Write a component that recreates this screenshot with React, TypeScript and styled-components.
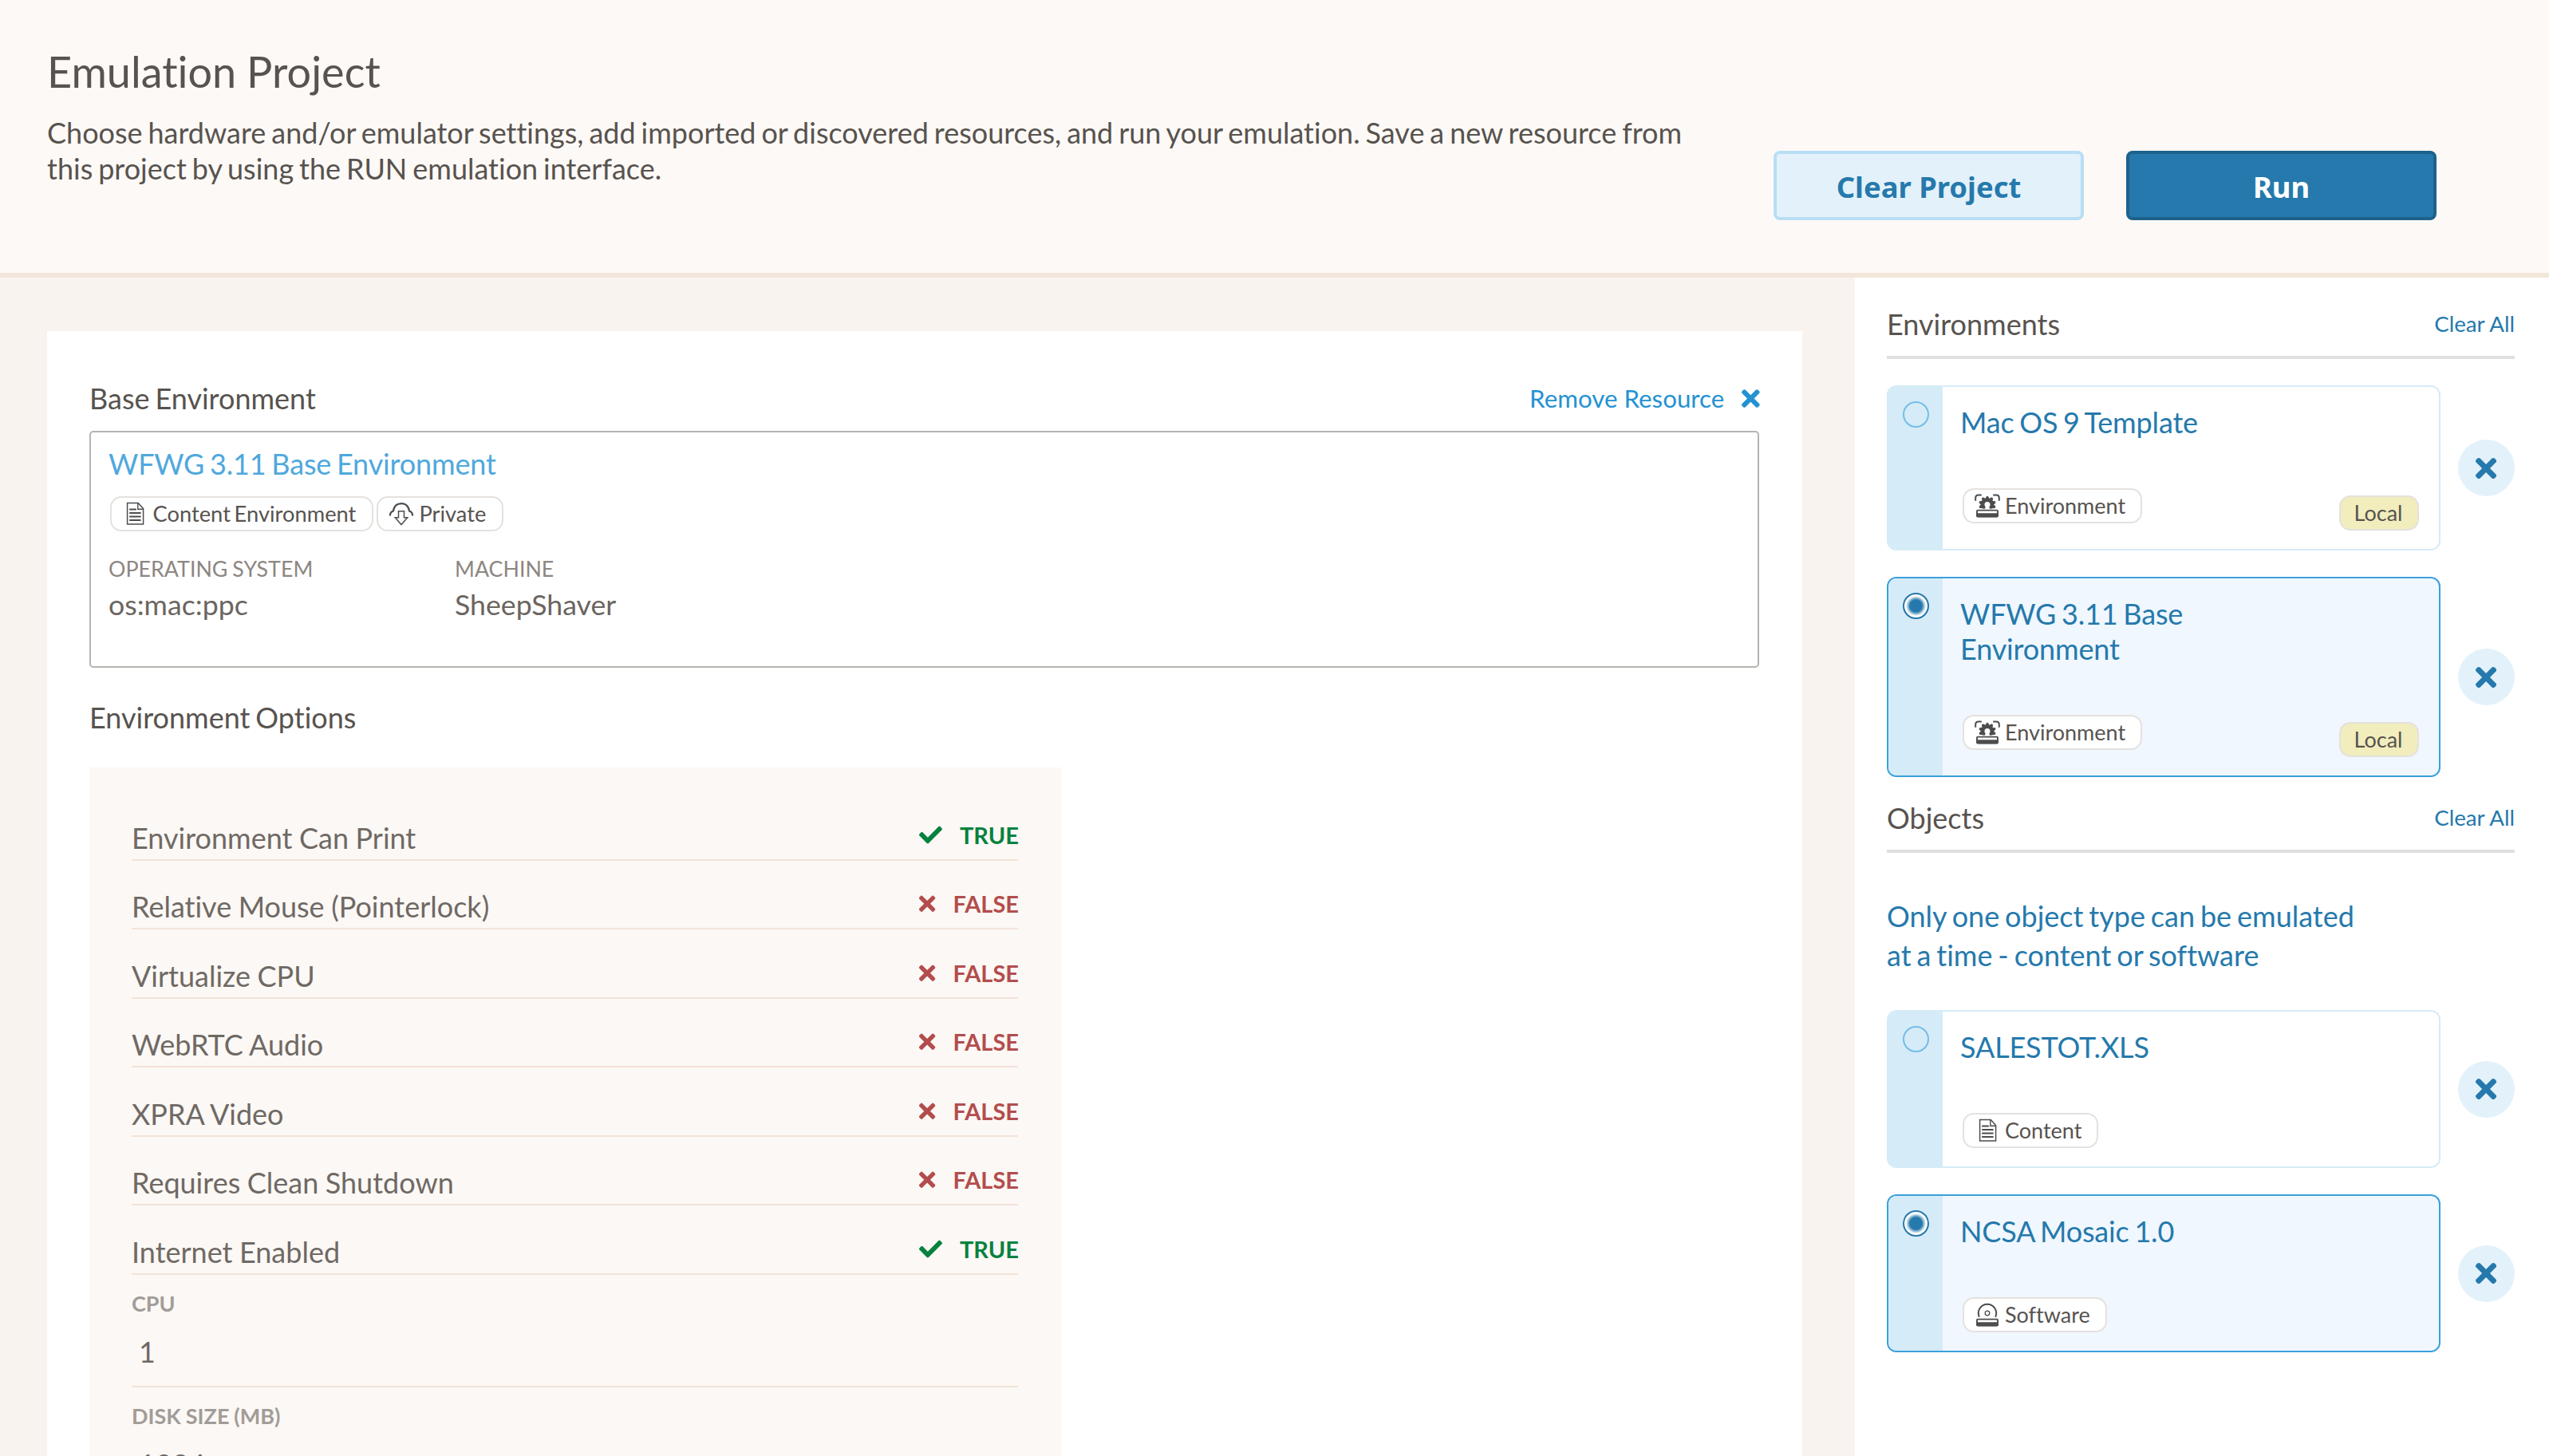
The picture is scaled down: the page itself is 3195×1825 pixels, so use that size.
import React from 'react';
import styled, {createGlobalStyle, css} from "styled-components";
import {FaCheck, FaTimes} from "react-icons/fa";

type IconName = "content" | "private" | "environment" | "software"

type Resource = {
    title: string,
    type: string,
    icon: IconName,
    selected?: boolean,
    local?: boolean,
}

const ENVIRONMENTS: Resource[] = [
    {title: "Mac OS 9 Template", type: "Environment", icon: "environment", local: true},
    {title: "WFWG 3.11 Base Environment", type: "Environment", icon: "environment", local: true, selected: true},
]

const OBJECTS: Resource[] = [
    {title: "SALESTOT.XLS", type: "Content", icon: "content"},
    {title: "NCSA Mosaic 1.0", type: "Software", icon: "software", selected: true},
]

const OPTIONS: { label: string, enabled: boolean }[] = [
    {label: "Environment Can Print", enabled: true},
    {label: "Relative Mouse (Pointerlock)", enabled: false},
    {label: "Virtualize CPU", enabled: false},
    {label: "WebRTC Audio", enabled: false},
    {label: "XPRA Video", enabled: false},
    {label: "Requires Clean Shutdown", enabled: false},
    {label: "Internet Enabled", enabled: true},
]

const SETTINGS = [
    {label: "CPU", value: "1"},
    {label: "DISK SIZE (MB)", value: "1024"},
]

const GlobalStyle = createGlobalStyle`
    * {
        box-sizing: border-box;
    }

    body {
        margin: 0;
        font-family: Lato, "Liberation Sans", sans-serif;
        font-size: 36px;
        line-height: 44px;
        font-variant-ligatures: none;
        word-spacing: -2.3px;
        color: #57534f;
    }

    h1, h2, h3, p {
        margin: 0;
        font-weight: 400;
        font-size: inherit;
    }

    button {
        border: 0;
        padding: 0;
        background: none;
        font: inherit;
        font-variant-ligatures: none;
        cursor: pointer;
    }
`

const Page = styled.div`
    height: 1825px;
    display: flex;
    flex-direction: column;
    overflow: hidden;
`

const Header = styled.header`
    flex: none;
    height: 348px;
    display: flex;
    justify-content: space-between;
    padding: 58px 141px 0 59px;
    background: #fdf9f6;
    border-bottom: 6px solid #f2e6da;
`

const Intro = styled.div`
    width: 2076px;
`

const PageTitle = styled.h1`
    font-size: 54px;
    line-height: 64px;
    margin-bottom: 22px;
    word-spacing: -1px;
`

const Description = styled.p`
    line-height: 45px;
`

const Actions = styled.div`
    display: flex;
    gap: 53px;
    padding-top: 131px;
`

const ActionButton = styled.button<{ $primary?: boolean }>`
    width: 389px;
    height: 87px;
    padding-top: 2px;
    border: 4px solid #b8def5;
    border-radius: 8px;
    background: #e3f1fa;
    color: #2579ac;
    font-family: "Noto Sans", "Open Sans", sans-serif;
    font-size: 36.4px;
    font-weight: 700;
    word-spacing: 0;

    ${({$primary}) => $primary && css`
        border-color: #1d628c;
        background: #2579ac;
        color: #fff;
    `}
`

const Content = styled.div`
    flex: 1;
    min-height: 0;
    display: grid;
    grid-template-columns: 2325px 1fr;
`

const Main = styled.main`
    padding: 67px 66px 0 59px;
    background: #f8f3ee;
    overflow: hidden;
`

const Card = styled.section`
    min-height: 1500px;
    padding: 62px 54px 0 53px;
    background: #fff;
`

const CardHeader = styled.div`
    display: flex;
    justify-content: space-between;
    align-items: center;
    margin-bottom: 19px;
`

const RemoveButton = styled.button`
    display: flex;
    align-items: center;
    gap: 22px;
    margin-right: -1px;
    font-size: 31.3px;
    line-height: 36px;
    color: #2492d1;
`

const Cross = styled(FaTimes)<{ $size: number }>`
    flex: none;
    height: ${({$size}) => $size}px;
    width: ${({$size}) => $size * 0.6875}px;
`

const BaseBox = styled.div`
    height: 297px;
    padding: 17px 22px;
    border: 2px solid #b8b3af;
    border-radius: 5px;
`

const BaseTitle = styled.h3`
    letter-spacing: -0.15px;
    color: #4fa8dd;
`

const Badge = styled.span`
    display: inline-flex;
    align-items: center;
    gap: 6px;
    height: 44px;
    padding: 0 19px 1px 13px;
    border: 2px solid #e5e1de;
    border-radius: 14px;
    background: #fff;
    font-size: 27px;
    line-height: 39px;
    color: #57534f;
`

const BadgeList = styled.div`
    display: flex;
    gap: 4px;
    margin: 19px 0 31px 2px;

    ${Badge} {
        padding-right: 19.5px;
        gap: 6.5px;
        font-size: 27.3px;
    }
`

const LocalBadge = styled(Badge)`
    width: 100px;
    margin-top: 9px;
    padding: 0 2px 1px 0;
    justify-content: center;
    background: #f1edbd;
`

const BadgeIcon = styled.svg`
    flex: none;
    width: 32px;
    height: 30px;
    fill: none;
    stroke: #4d4d4d;
`

const Details = styled.div`
    display: grid;
    grid-template-columns: 434px 434px;
`

const DetailLabel = styled.div`
    margin-bottom: 7px;
    font-size: 26.8px;
    line-height: 32px;
    word-spacing: -1px;
    color: #8d8681;
`

const DetailValue = styled.div`
    font-size: 35.7px;
    color: #6b6560;
`

const SectionTitle = styled.h2`
    margin: 40px 0 41px;
`

const Options = styled.div`
    width: 1218px;
    padding: 30px 54px 0 53px;
    background: #fcf8f5;
    color: #6f6964;
    word-spacing: -0.7px;
`

const OptionRow = styled.div`
    height: 86.5px;
    display: flex;
    justify-content: space-between;
    align-items: flex-end;
    padding-bottom: 5px;
    border-bottom: 2px solid #f2e3d8;
`

const OptionState = styled.span<{ $enabled: boolean }>`
    display: flex;
    align-items: center;
    gap: 22px;
    margin: 0 -1px 8px 0;
    font-size: 29px;
    line-height: 34px;
    font-weight: 700;
    color: ${({$enabled}) => $enabled ? "#05823f" : "#b34d4d"};
`

const Setting = styled.div`
    height: 141px;
    padding-top: 20px;
    border-bottom: 2px solid #f2e3d8;
`

const SettingLabel = styled.div`
    margin-bottom: 22px;
    font-size: 27px;
    line-height: 32px;
    font-weight: 700;
    color: #a19c98;
`

const SettingValue = styled.div`
    padding-left: 9px;
`

const Sidebar = styled.aside`
    padding: 7px 43px 0 40px;
    background: #fff;
`

const SidebarHeader = styled.div`
    display: flex;
    justify-content: space-between;
    align-items: center;
    margin-top: 29px;
    padding-bottom: 18px;
    border-bottom: 4px solid #e0e0df;
`

const ClearAll = styled.button`
    font-size: 27.7px;
    line-height: 32px;
    color: #2579ac;
`

const Notice = styled.p`
    width: 620px;
    margin: 55px 0 44px;
    line-height: 49px;
    color: #2579ac;
`

const ResourceList = styled.div`
    display: flex;
    flex-direction: column;
    gap: 33px;
    margin-top: 33px;
`

const ResourceRow = styled.div`
    display: flex;
    align-items: center;
    justify-content: space-between;
`

const ResourceCard = styled.div<{ $selected?: boolean }>`
    width: 694px;
    display: flex;
    border: 2px solid ${({$selected}) => $selected ? "#3ba0dc" : "#d5ebf7"};
    border-radius: 12px;
    background: ${({$selected}) => $selected ? "#f0f7fe" : "#fff"};
    overflow: hidden;
`

const RadioStrip = styled.div`
    flex: none;
    width: 68px;
    display: flex;
    justify-content: center;
    padding-top: 18px;
    background: #d5ebf7;
`

const Radio = styled.span<{ $selected?: boolean }>`
    width: 33px;
    height: 33px;
    border: 2px solid ${({$selected}) => $selected ? "#2579ac" : "#74bde8"};
    border-radius: 50%;
    background: ${({$selected}) => $selected
            ? "radial-gradient(circle closest-side, #2579ac 52%, #fff 86%)"
            : "transparent"};
`

const ResourceBody = styled.div`
    flex: 1;
    padding: 22px 25px 23px 22px;
`

const ResourceTitle = styled.h3`
    width: 350px;
    margin-bottom: 61px;
    letter-spacing: -0.15px;
    color: #2579ac;
`

const ResourceFooter = styled.div`
    display: flex;
    justify-content: space-between;
    align-items: flex-start;
    margin-left: 3px;
`

const RoundButton = styled.button`
    width: 71px;
    height: 71px;
    display: flex;
    align-items: center;
    justify-content: center;
    border-radius: 50%;
    background: #e3f1fa;
    color: #2579ac;
`

const DriveBase = () => (
    <>
        <rect x="2" y="19.6" width="28" height="10" rx="1.5" fill="#fff" stroke="none"/>
        <rect x="3" y="20.6" width="26" height="7.8" rx="1" strokeWidth="1.9"/>
        <path d="M2.2 24.2h27.6v3a2.2 2.2 0 0 1-2.2 2.2H4.4a2.2 2.2 0 0 1-2.2-2.2z" fill="#4d4d4d" stroke="none"/>
    </>
)

const ICONS: Record<IconName, React.ReactNode> = {
    content: (
        <>
            <path d="M6.6 1.6h13.600l6.400 7v19.400H6.600z" strokeWidth="1.5"/>
            <path d="M19.8 1.8v7.400h6.800" strokeWidth="1.4"/>
            <path d="M10 9.5h7M10 14h12.800M10 18.500h12.800M10 23h12.800" strokeWidth="2.2" strokeLinecap="round"/>
        </>
    ),
    private: (
        <>
            <path
                d="M1.9 17.5c0-3.400 1.500-5.300 4-6C7 5.500 11 2.200 16 2.200s9 3.300 10.100 9.300c2.500.7 4 2.600 4 6"
                strokeWidth="2.3"
            />
            <path d="M12.5 11.8h7v8h4.200L16 28.600l-7.700-8.800h4.200z" strokeWidth="1.5"/>
        </>
    ),
    environment: (
        <>
            <path d="M1.2 8.8V5.2Q1.2 1.600 4.800 1.600H8.800M23.200 1.600h4q3.600 0 3.600 3.600v3.600" strokeWidth="2"/>
            <circle cx="16" cy="13.5" r="5.7" strokeWidth="4.4"/>
            {[-108, -72, -36, 0, 36, 72, 108].map(angle => (
                <path
                    key={angle}
                    d="M13.6 6.8L15.300 3.300h1.400L18.400 6.800z"
                    transform={`rotate(${angle} 16 13.5)`}
                    fill="#4d4d4d"
                    strokeWidth="1"
                />
            ))}
            <path d="M14 15.500L12.600 20h6.800l-1.400-4.500z" fill="#fff" stroke="none"/>
            <rect x="2" y="18.6" width="28" height="3" fill="#fff" stroke="none"/>
            <DriveBase/>
        </>
    ),
    software: (
        <>
            <path d="M5.9 17.8A11.200 11.200 0 1 1 26.100 17.800" strokeWidth="2"/>
            <circle cx="16" cy="13" r="2.8" strokeWidth="1.3"/>
            <DriveBase/>
        </>
    ),
}

const TypeBadge = ({icon, text}: { icon: IconName, text: string }) => (
    <Badge>
        <BadgeIcon viewBox="0 0 32 30">{ICONS[icon]}</BadgeIcon>
        {text}
    </Badge>
)

const StateIcon = ({enabled}: { enabled: boolean }) => (
    enabled ? <FaCheck size={"29px"}/> : <Cross $size={29.5}/>
)

const ResourceItem = ({title, type, icon, selected, local}: Resource) => (
    <ResourceRow>
        <ResourceCard $selected={selected}>
            <RadioStrip>
                <Radio $selected={selected}/>
            </RadioStrip>
            <ResourceBody>
                <ResourceTitle>{title}</ResourceTitle>
                <ResourceFooter>
                    <TypeBadge icon={icon} text={type}/>
                    {local && <LocalBadge>Local</LocalBadge>}
                </ResourceFooter>
            </ResourceBody>
        </ResourceCard>
        <RoundButton>
            <Cross $size={38}/>
        </RoundButton>
    </ResourceRow>
)

const App = () => {
    return (
        <Page>
            <GlobalStyle/>
            <Header>
                <Intro>
                    <PageTitle>Emulation Project</PageTitle>
                    <Description>
                        Choose hardware and/or emulator settings, add imported or discovered resources, and run your
                        emulation. Save a new resource from this project by using the RUN emulation interface.
                    </Description>
                </Intro>
                <Actions>
                    <ActionButton>Clear Project</ActionButton>
                    <ActionButton $primary>Run</ActionButton>
                </Actions>
            </Header>
            <Content>
                <Main>
                    <Card>
                        <CardHeader>
                            <h2>Base Environment</h2>
                            <RemoveButton>
                                Remove Resource
                                <Cross $size={33}/>
                            </RemoveButton>
                        </CardHeader>
                        <BaseBox>
                            <BaseTitle>WFWG 3.11 Base Environment</BaseTitle>
                            <BadgeList>
                                <TypeBadge icon="content" text="Content Environment"/>
                                <TypeBadge icon="private" text="Private"/>
                            </BadgeList>
                            <Details>
                                <div>
                                    <DetailLabel>OPERATING SYSTEM</DetailLabel>
                                    <DetailValue>os:mac:ppc</DetailValue>
                                </div>
                                <div>
                                    <DetailLabel>MACHINE</DetailLabel>
                                    <DetailValue>SheepShaver</DetailValue>
                                </div>
                            </Details>
                        </BaseBox>
                        <SectionTitle>Environment Options</SectionTitle>
                        <Options>
                            {OPTIONS.map(({label, enabled}) => (
                                <OptionRow key={label}>
                                    {label}
                                    <OptionState $enabled={enabled}>
                                        <StateIcon enabled={enabled}/>
                                        {enabled ? "TRUE" : "FALSE"}
                                    </OptionState>
                                </OptionRow>
                            ))}
                            {SETTINGS.map(({label, value}) => (
                                <Setting key={label}>
                                    <SettingLabel>{label}</SettingLabel>
                                    <SettingValue>{value}</SettingValue>
                                </Setting>
                            ))}
                        </Options>
                    </Card>
                </Main>
                <Sidebar>
                    <SidebarHeader>
                        <h2>Environments</h2>
                        <ClearAll>Clear All</ClearAll>
                    </SidebarHeader>
                    <ResourceList>
                        {ENVIRONMENTS.map(item => <ResourceItem key={item.title} {...item}/>)}
                    </ResourceList>
                    <SidebarHeader>
                        <h2>Objects</h2>
                        <ClearAll>Clear All</ClearAll>
                    </SidebarHeader>
                    <Notice>Only one object type can be emulated at a time - content or software</Notice>
                    <ResourceList>
                        {OBJECTS.map(item => <ResourceItem key={item.title} {...item}/>)}
                    </ResourceList>
                </Sidebar>
            </Content>
        </Page>
    );
};

export default App;
